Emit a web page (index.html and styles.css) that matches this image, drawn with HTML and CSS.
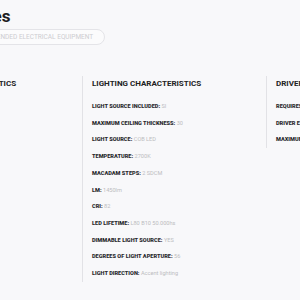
FILE: index.html
```html
<!DOCTYPE html>
<html>
<head>
<meta charset="utf-8">
<link rel="stylesheet" href="styles.css">
</head>
<body>
<div class="page">
  <header class="head">
    <h1 class="title">Technical features</h1>
    <span class="badge">Recommended electrical equipment</span>
  </header>
  <section class="cols">
    <div class="col">
      <h2 class="col-title">General characteristics</h2>
      <ul class="rows">
        <li><b>IP:</b> 20</li>
        <li><b>IK:</b> 08</li>
        <li><b>CLASS:</b> I</li>
      </ul>
    </div>
    <div class="col">
      <h2 class="col-title">Lighting characteristics</h2>
      <ul class="rows">
        <li><b>Light source included:</b> SI</li>
        <li><b>Maximum ceiling thickness:</b> 30</li>
        <li><b>Light source:</b> COB LED</li>
        <li><b>Temperature:</b> 2700K</li>
        <li><b>Macadam steps:</b> 2 SDCM</li>
        <li><b>Lm:</b> <span class="lc">1450lm</span></li>
        <li><b>CRI:</b> 82</li>
        <li><b>LED lifetime:</b> L80 B10 50.000<span class="lc">hs</span></li>
        <li><b>Dimmable light source:</b> YES</li>
        <li><b>Degrees of light aperture:</b> 56</li>
        <li><b>Light direction:</b> <span class="lc">Accent lighting</span></li>
      </ul>
    </div>
    <div class="col">
      <h2 class="col-title">Driver characteristics</h2>
      <ul class="rows">
        <li><b>Requires driver:</b> SI</li>
        <li><b>Driver embedded:</b> NO</li>
        <li><b>Maximum power:</b> 15W</li>
      </ul>
    </div>
  </section>
</div>
</body>
</html>
```
FILE: styles.css
```css
html, body {
  margin: 0;
  padding: 0;
  background: #f8f8fa;
  overflow: hidden;
  font-family: Roboto, "Liberation Sans", sans-serif;
}
.page {
  margin-left: -102px;
  width: 700px;
}
.head {
  padding: 6px 0 0 0;
  display: flex;
  flex-direction: column;
  align-items: flex-start;
}
.title {
  margin: 0 0 0 -29px;
  font-size: 17px;
  font-weight: 700;
  color: #1d1d22;
  line-height: 20px;
}
.badge {
  margin-top: 3px;
  margin-left: 59px;
  border: 1px solid #e4e4e8;
  border-radius: 8px;
  padding: 0 11px;
  height: 14px;
  line-height: 14px;
  font-size: 6.5px;
  text-transform: uppercase;
  color: #cdcdd1;
  background: #fbfbfc;
}
.cols {
  margin-top: 31px;
  display: grid;
  grid-template-columns: repeat(3, 184px);
  align-items: start;
}
.col {
  border-left: 1px solid #e2e2e6;
  padding-left: 9px;
  padding-top: 2px;
}
.col-title {
  margin: 0;
  font-size: 8px;
  font-weight: 700;
  text-transform: uppercase;
  color: #222;
  line-height: 12px;
}
.rows {
  list-style: none;
  margin: 8px 0 0 0;
  padding: 0;
}
.rows li {
  font-size: 5.6px;
  line-height: 16.7px;
  text-transform: uppercase;
  color: #bcbcc0;
}
.rows li .lc { text-transform: none; }
.rows b {
  font-weight: 900;
  color: #2a2a2e;
}
```
